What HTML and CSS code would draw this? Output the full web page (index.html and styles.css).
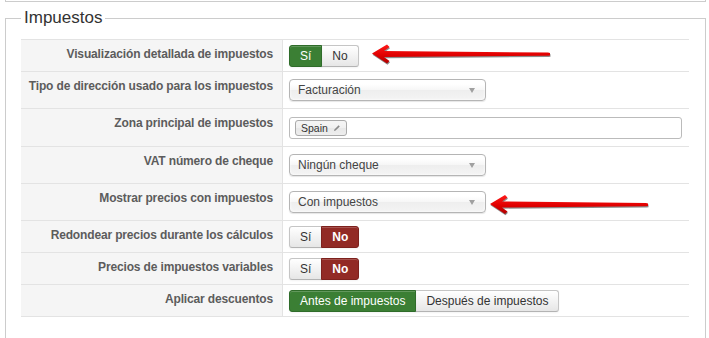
FILE: index.html
```html
<!DOCTYPE html>
<html lang="es">
<head>
<meta charset="utf-8">
<title>Impuestos</title>
<link rel="stylesheet" href="styles.css">
</head>
<body>
<div class="prev"></div>
<fieldset class="section">
  <legend class="section-title">Impuestos</legend>
  <div class="rows">
    <div class="row">
      <div class="label">Visualización detallada de impuestos</div>
      <div class="value">
        <div class="btn-group">
          <span class="btn btn-yes">Sí</span><span class="btn">No</span>
        </div>
      </div>
    </div>
    <div class="row row-tall">
      <div class="label">Tipo de dirección usado para los impuestos</div>
      <div class="value">
        <div class="select"><span>Facturación</span><i class="caret"></i></div>
      </div>
    </div>
    <div class="row row-taller">
      <div class="label">Zona principal de impuestos</div>
      <div class="value">
        <div class="tags-input">
          <span class="tag">Spain
            <svg class="pencil" width="8" height="8" viewBox="0 0 8 8"><path d="M1 7 L1.4 5.4 L5.6 1.2 L6.8 2.4 L2.6 6.6 Z" fill="#8a8a8a"/></svg>
          </span>
        </div>
      </div>
    </div>
    <div class="row row-tall">
      <div class="label">VAT número de cheque</div>
      <div class="value">
        <div class="select"><span>Ningún cheque</span><i class="caret"></i></div>
      </div>
    </div>
    <div class="row row-tall">
      <div class="label">Mostrar precios con impuestos</div>
      <div class="value">
        <div class="select"><span>Con impuestos</span><i class="caret"></i></div>
      </div>
    </div>
    <div class="row">
      <div class="label">Redondear precios durante los cálculos</div>
      <div class="value">
        <div class="btn-group">
          <span class="btn">Sí</span><span class="btn btn-no">No</span>
        </div>
      </div>
    </div>
    <div class="row">
      <div class="label">Precios de impuestos variables</div>
      <div class="value">
        <div class="btn-group">
          <span class="btn">Sí</span><span class="btn btn-no">No</span>
        </div>
      </div>
    </div>
    <div class="row row-last">
      <div class="label">Aplicar descuentos</div>
      <div class="value">
        <div class="btn-group">
          <span class="btn btn-yes">Antes de impuestos</span><span class="btn">Después de impuestos</span>
        </div>
      </div>
    </div>
  </div>
</fieldset>

<svg class="arrows" width="709" height="338" viewBox="0 0 709 338">
  <defs>
    <linearGradient id="red" x1="0" y1="0" x2="0" y2="1">
      <stop offset="0" stop-color="#ff1a1a"/>
      <stop offset="0.55" stop-color="#e00000"/>
      <stop offset="1" stop-color="#b00000"/>
    </linearGradient>
    <filter id="shadow" x="-5%" y="-50%" width="110%" height="200%">
      <feGaussianBlur stdDeviation="0.7"/>
    </filter>
  </defs>
  <g>
    <polygon filter="url(#shadow)" fill="rgba(0,0,0,0.45)" transform="translate(0.5,1.2)"
      points="372,53.5 387,44.5 389.5,47 384,51 548,52.6 550,53 550,55.5 548,55.8 384,57 389.5,61 387,63.5"/>
    <polygon fill="url(#red)"
      points="372,53.5 387,44.5 389.5,47 384,51 548,52.6 550,53 550,55.5 548,55.8 384,57 389.5,61 387,63.5"/>
  </g>
  <g>
    <polygon filter="url(#shadow)" fill="rgba(0,0,0,0.45)" transform="translate(0.5,1.2)"
      points="490,204 505,195 507.5,197.5 502,201.5 646,203 648,203.4 648,206 646,206.3 502,207.5 507.5,211.5 505,214"/>
    <polygon fill="url(#red)"
      points="490,204 505,195 507.5,197.5 502,201.5 646,203 648,203.4 648,206 646,206.3 502,207.5 507.5,211.5 505,214"/>
  </g>
</svg>
</body>
</html>
```

FILE: styles.css
```css
* { box-sizing: border-box; }

html, body {
  margin: 0;
  padding: 0;
  background: #fff;
}

body {
  position: relative;
  font-family: "Liberation Sans", Arial, sans-serif;
  color: #333;
  width: 709px;
  height: 338px;
  overflow: hidden;
}

.prev {
  margin: 0 3px 0 5px;
  height: 2px;
  border: 1px solid #ccc;
  border-top: 0;
}

.section {
  margin: 6px 3px 0 5px;
  border: 1px solid #ccc;
  padding: 11px 16px 21px 15px;
  min-width: 0;
}

.section-title {
  font-size: 17px;
  line-height: 20px;
  color: #333;
  padding: 0 3px;
  margin: 0;
}

.rows {
  display: flex;
  flex-direction: column;
}

.row {
  display: flex;
  height: 32px;
  border-top: 1px solid #e3e3e3;
}

.row-tall { height: 37px; }
.row-taller { height: 38px; }
.row-last {
  height: 33px;
  border-bottom: 1px solid #e3e3e3;
}

.label {
  flex: none;
  width: 262px;
  background: #f5f5f5;
  border-right: 1px solid #e3e3e3;
  padding: 7px 9px 0 0;
  line-height: 15px;
  text-align: right;
  font-size: 12px;
  letter-spacing: -0.15px;
  font-weight: bold;
  color: #5c5c5c;
  white-space: nowrap;
}

.value {
  flex: 1;
  display: flex;
  align-items: center;
  padding-left: 6px;
  padding-right: 6px;
}

.btn-group {
  display: flex;
}

.btn {
  display: inline-block;
  height: 22px;
  line-height: 20px;
  padding: 0 10px;
  font-size: 12px;
  color: #333;
  border: 1px solid #c5c5c5;
  border-bottom-color: #b3b3b3;
  background: linear-gradient(#ffffff, #e6e6e6);
  box-shadow: inset 0 1px 0 rgba(255,255,255,.2), 0 1px 2px rgba(0,0,0,.05);
  white-space: nowrap;
}

.btn + .btn { margin-left: -1px; }
.btn:first-child { border-radius: 3px 0 0 3px; }
.btn:last-child { border-radius: 0 3px 3px 0; }

.btn-yes {
  background: #3b7f34;
  border-color: #2f6c2a;
  color: #fff;
  position: relative;
}

.btn-no {
  background: #922a25;
  border-color: #7d211d;
  color: #fff;
  font-weight: bold;
  position: relative;
}

.select {
  width: 197px;
  height: 22px;
  border: 1px solid #b5b5b5;
  border-radius: 4px;
  background: linear-gradient(#fff 20%, #f6f6f6 50%, #eee 52%, #f4f4f4 100%);
  box-shadow: inset 0 0 3px #fff, 0 1px 1px rgba(0,0,0,.1);
  display: flex;
  align-items: center;
  justify-content: space-between;
  padding: 0 8px 0 8px;
  font-size: 12px;
  color: #444;
}

.caret {
  width: 0;
  height: 0;
  border-left: 3.5px solid transparent;
  border-right: 3.5px solid transparent;
  border-top: 5px solid #a0a0a0;
  margin-right: 2px;
}

.tags-input {
  width: 393px;
  height: 22px;
  border: 1px solid #bbb;
  border-radius: 3px;
  background: #fff;
  display: flex;
  align-items: center;
  padding: 0 5px;
}

.tag {
  display: inline-flex;
  align-items: center;
  gap: 5px;
  height: 16px;
  padding: 0 5px 0 5px;
  border: 1px solid #aaa;
  border-radius: 3px;
  background: linear-gradient(#f4f4f4 20%, #f0f0f0 50%, #e8e8e8 52%, #eee 100%);
  font-size: 10.5px;
  color: #333;
}

.pencil { display: block; }

.arrows {
  position: absolute;
  left: 0;
  top: 0;
  pointer-events: none;
}
```
